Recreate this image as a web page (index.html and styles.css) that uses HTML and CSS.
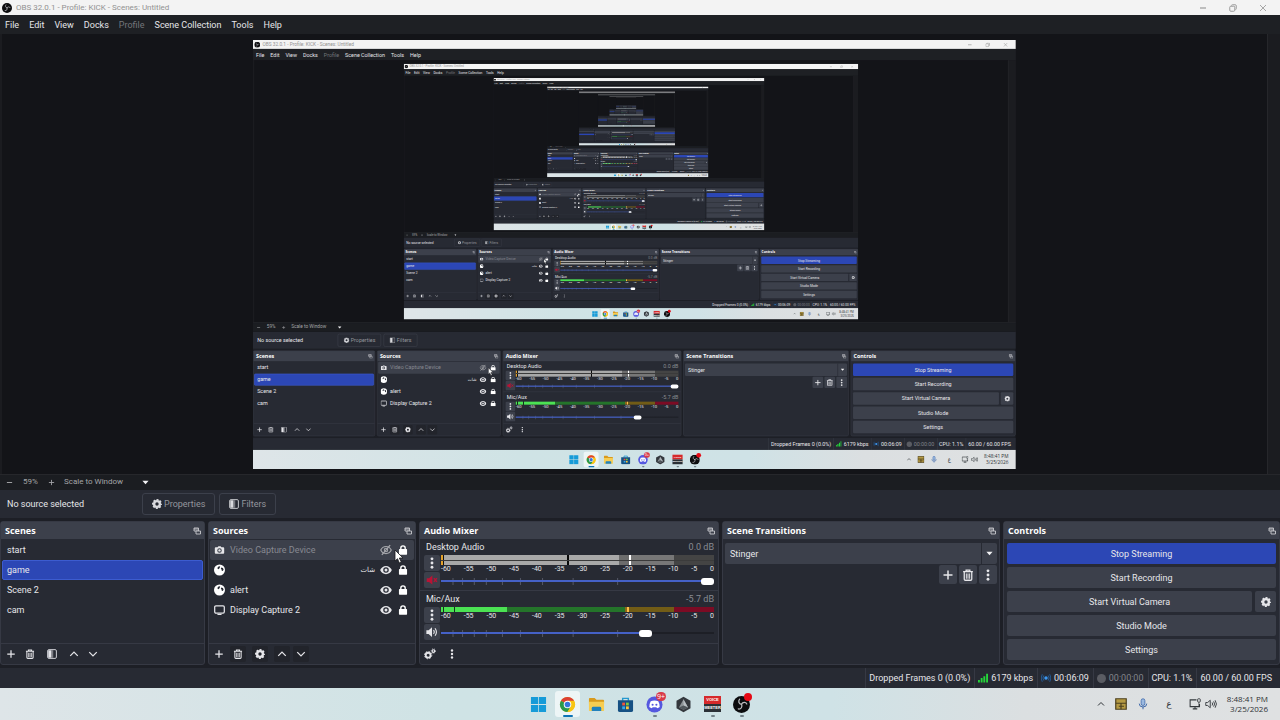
FILE: index.html
```html
<!DOCTYPE html>
<html lang="en">
<head>
<meta charset="utf-8">
<title>OBS 32.0.1 - Profile: KICK - Scenes: Untitled</title>
<link rel="stylesheet" href="styles.css">
</head>
<body>
<svg class="sprite" aria-hidden="true">
  <symbol id="obs" viewBox="0 0 16 16"><circle cx="8" cy="8" r="8" fill="#0c0c0e"/><g fill="none" stroke="#b9babd" stroke-width="1.200" stroke-linecap="round"><path d="M8 7.800C5.500 7.500 4.700 5 6.200 3"/><path d="M8 7.800C9.200 5.600 12 5.500 13 7.500"/><path d="M8 7.800C9.200 10.200 7.500 12.600 5 12.200"/></g></symbol>
  <symbol id="plus" viewBox="0 0 16 16"><path d="M8 2v12M2 8h12" fill="none" stroke="currentColor" stroke-width="2"/></symbol>
  <symbol id="minus" viewBox="0 0 16 16"><path d="M2 8h12" fill="none" stroke="currentColor" stroke-width="2.200"/></symbol>
  <symbol id="trash" viewBox="0 0 16 16"><path d="M1.500 3.500h13M5.500 3V1.500h5V3M3 4v9.500q0 1.500 1.500 1.500h7q1.500 0 1.500-1.500V4" fill="none" stroke="currentColor" stroke-width="1.700"/><path d="M5.800 6v7M8 6v7M10.200 6v7" stroke="currentColor" stroke-width="1.300"/></symbol>
  <symbol id="filter" viewBox="0 0 16 16"><rect x="1" y="1" width="14" height="14" rx="2" fill="none" stroke="currentColor" stroke-width="1.400"/><path d="M2 2h5v12H2z" fill="currentColor"/><path d="M7 2h3v12H7z" fill="currentColor" opacity=".45"/></symbol>
  <symbol id="up" viewBox="0 0 16 16"><path d="M2 11l6-6 6 6" fill="none" stroke="currentColor" stroke-width="2"/></symbol>
  <symbol id="down" viewBox="0 0 16 16"><path d="M2 5l6 6 6-6" fill="none" stroke="currentColor" stroke-width="2"/></symbol>
  <symbol id="gear" viewBox="0 0 16 16"><circle cx="8" cy="8" r="4.600" fill="none" stroke="currentColor" stroke-width="3.800"/><circle cx="8" cy="8" r="6.800" fill="none" stroke="currentColor" stroke-width="2.400" stroke-dasharray="3.200 2.140" stroke-dashoffset="1.600"/></symbol>
  <symbol id="gears" viewBox="0 0 16 16"><g fill="none" stroke="currentColor"><circle cx="5.500" cy="9.500" r="3.200" stroke-width="2.400"/><circle cx="5.500" cy="9.500" r="4.900" stroke-width="1.200" stroke-dasharray="2 1.850"/><circle cx="12.500" cy="4" r="1.700" stroke-width="1.600"/><circle cx="12.500" cy="4" r="2.900" stroke-width="1" stroke-dasharray="1.300 1.300"/></g></symbol>
  <symbol id="dots" viewBox="0 0 16 16"><g fill="currentColor"><circle cx="8" cy="2.400" r="1.900"/><circle cx="8" cy="8" r="1.900"/><circle cx="8" cy="13.600" r="1.900"/></g></symbol>
  <symbol id="popout" viewBox="0 0 16 16"><path d="M2 2h9v6H2zM2 4h9" fill="none" stroke="currentColor" stroke-width="1.800"/><path d="M6 8h9v6H6z" fill="#3c404b" stroke="currentColor" stroke-width="1.800"/></symbol>
  <symbol id="camera" viewBox="0 0 16 16"><path fill="currentColor" fill-rule="evenodd" d="M2 3.500h3L6.200 2h3.600L11 3.500h3q1.500 0 1.500 1.500v7.500q0 1.500-1.500 1.500H2Q.5 14 .5 12.500V5Q.5 3.500 2 3.500zM8 5a3.600 3.600 0 1 0 0 7.200A3.600 3.600 0 0 0 8 5z"/><circle cx="8" cy="8.600" r="1.900" fill="currentColor"/></symbol>
  <symbol id="globe" viewBox="0 0 16 16"><circle cx="8" cy="8" r="8" fill="#fff"/><path fill="#272a33" d="M6.500 3L9 2.500l-.5 2L7.500 6 6 7 4.800 5zM10.500 4.500l2.500.5 1 2.500-1.500 2-1.200-.5-.3-1.800-1-1z"/></symbol>
  <symbol id="monitor" viewBox="0 0 16 16"><rect x="1" y="2" width="14" height="10.500" rx="1.800" fill="none" stroke="currentColor" stroke-width="1.800"/><path d="M5 14.500h6" stroke="currentColor" stroke-width="1.600"/></symbol>
  <symbol id="eye" viewBox="0 0 16 16"><path fill="currentColor" fill-rule="evenodd" d="M8 2.500c3.500 0 6.500 2.300 7.800 5.500-1.300 3.200-4.300 5.500-7.800 5.500S1.500 11.200.2 8C1.500 4.800 4.500 2.500 8 2.500zM8 4.300a3.700 3.700 0 1 0 0 7.400 3.700 3.700 0 0 0 0-7.400z"/><circle cx="8" cy="8" r="2" fill="currentColor"/></symbol>
  <symbol id="eyeoff" viewBox="0 0 16 16"><path d="M1 8c1.500-3 4-4.700 7-4.700S13.500 5 15 8c-1.500 3-4 4.700-7 4.700S2.500 11 1 8z" fill="none" stroke="currentColor" stroke-width="1.600"/><circle cx="8" cy="8" r="2.300" fill="none" stroke="currentColor" stroke-width="1.400"/><path d="M2.500 14.500l11-13" stroke="currentColor" stroke-width="1.700"/></symbol>
  <symbol id="lock" viewBox="0 0 16 16"><rect x="1.500" y="6.500" width="13" height="9" rx="1" fill="#fff"/><path d="M4.500 7V4.800a3.500 3.500 0 0 1 7 0V7" fill="none" stroke="#fff" stroke-width="2.200"/></symbol>
  <symbol id="speaker" viewBox="0 0 16 16"><path d="M.5 5.500h3L8 1.500v13l-4.500-4h-3z" fill="currentColor"/><path d="M10 5.500q2 2.500 0 5M12 3q3.800 5 0 10" fill="none" stroke="currentColor" stroke-width="1.500"/></symbol>
  <symbol id="muted" viewBox="0 0 16 16"><path d="M1 5.500h3L8.500 2v12L4 10.500H1z" fill="currentColor"/><path d="M10.500 5.500l4 5m0-5l-4 5" stroke="currentColor" stroke-width="2"/></symbol>
  <symbol id="caret" viewBox="0 0 16 16"><path d="M1 4h14l-7 8z" fill="currentColor"/></symbol>
  <symbol id="bars" viewBox="0 0 16 16"><path d="M0 11h3v4H0zM4.300 8h3v7h-3zM8.600 5h3v10h-3zM13 1h3v14h-3z" fill="#25d63a"/></symbol>
  <symbol id="live" viewBox="0 0 16 16"><circle cx="8" cy="8" r="2.800" fill="#3b98f2"/><path d="M4.500 4q-3 4 0 8M11.500 4q3 4 0 8M2 2q-3.500 6 0 12M14 2q3.500 6 0 12" fill="none" stroke="#2467ae" stroke-width="1.300"/></symbol>
  <symbol id="windows" viewBox="0 0 18 18"><path d="M1 1h7.600v7.600H1zM9.400 1H17v7.600H9.400zM1 9.400h7.600V17H1zM9.400 9.400H17V17H9.400z" fill="#169bd8"/></symbol>
  <symbol id="chrome" viewBox="0 0 18 18"><circle cx="9" cy="9" r="8" fill="#f8c515"/><path d="M9 9L2.070 5A8 8 0 0 1 15.930 5z" fill="#dc4034"/><path d="M9 9L2.070 5A8 8 0 0 0 9 17l3.500-6z" fill="#29994d"/><path d="M9 5h6.930A8 8 0 0 1 9 17l3.600-6z" fill="#f8c515"/><circle cx="9" cy="9" r="4" fill="#fff"/><circle cx="9" cy="9" r="3" fill="#3576db"/></symbol>
  <symbol id="folder" viewBox="0 0 18 18"><path d="M1 3q0-1 1-1h5l2 2h7q1 0 1 1v3H1z" fill="#d99a1c"/><path d="M1 6h16v9q0 1-1 1H2q-1 0-1-1z" fill="#f7cd52"/><path d="M4 16v-3q0-1.500 1.500-1.500h7Q14 11.500 14 13v3z" fill="#2181bd"/></symbol>
  <symbol id="store" viewBox="0 0 18 18"><path d="M6 5V2.500h6V5" fill="none" stroke="#2799cf" stroke-width="1.500"/><path d="M1 4.500h16V15q0 2-2 2H3q-2 0-2-2z" fill="#155083"/><path d="M5.500 7h3v3h-3z" fill="#f0533c"/><path d="M9.500 7h3v3h-3z" fill="#7fc63d"/><path d="M5.500 11h3v3h-3z" fill="#35a9e8"/><path d="M9.500 11h3v3h-3z" fill="#fac63c"/></symbol>
  <symbol id="discord" viewBox="0 0 18 18"><circle cx="9" cy="9" r="8.500" fill="#5558df"/><path d="M5 5.500q4-1.400 8 0 1.700 3 1.500 6.200-1.300 1.100-2.800 1.300l-.7-1.200H7L6.300 13q-1.500-.2-2.800-1.300Q3.300 8.500 5 5.500z" fill="#fff"/><circle cx="7" cy="9.300" r="1.100" fill="#5558df"/><circle cx="11" cy="9.300" r="1.100" fill="#5558df"/></symbol>
  <symbol id="cube" viewBox="0 0 18 18"><path d="M9 .8l7.400 4.100v8.200L9 17.200l-7.400-4.100V4.900z" fill="#34383d"/><path d="M9 3.500l4.800 8.800L9 14.500l-4.800-2.200z" fill="#8d9397"/><path d="M9 3.500V10l4.800 2.300z" fill="#b8bec2"/><path d="M4.200 12.300L9 10l4.800 2.300L9 14.500z" fill="#50575c"/></symbol>
  <symbol id="tiles" viewBox="0 0 16 16"><path d="M1 1h14v14H1z" fill="#b59a43" stroke="#4d4120" stroke-width="1.600"/><path d="M1 7h14M8 7v8M5 11h7" stroke="#4d4120" stroke-width="1.600"/></symbol>
  <symbol id="mic" viewBox="0 0 16 16"><rect x="5.500" y="1" width="5" height="9" rx="2.500" fill="#9bb9df" stroke="#3a65a9"/><path d="M3 7.500q0 4.500 5 4.500t5-4.500M8 12v3" fill="none" stroke="#3a65a9" stroke-width="1.300"/></symbol>
  <symbol id="network" viewBox="0 0 16 16"><path d="M10 2.500H1.500v9H14V8M5 14.500h6M8 12v2" fill="none" stroke="#33383c" stroke-width="1.400"/><rect x="11.500" y="1" width="3.500" height="4.500" rx="1" fill="none" stroke="#33383c" stroke-width="1.200"/><path d="M13.200 5.500v6" stroke="#33383c"/></symbol>
  <symbol id="sound" viewBox="0 0 16 16"><path d="M1 6h2.500L7 3v10l-3.500-3H1zM9.500 6q1.300 2 0 4M11.500 4.500q2.500 3.500 0 7M13.500 3q3.500 5 0 10" fill="none" stroke="#33383c" stroke-width="1.200"/></symbol>
  <symbol id="restore" viewBox="0 0 16 16"><rect x="1.500" y="4.500" width="10" height="10" rx="2" fill="none" stroke="currentColor" stroke-width="1.800"/><path d="M5 3q0-1.500 2-1.500h5.500q2 0 2 2V9q0 2-1.500 2" fill="none" stroke="currentColor" stroke-width="1.800"/></symbol>
  <symbol id="close" viewBox="0 0 16 16"><path d="M2 2l12 12M14 2L2 14" fill="none" stroke="currentColor" stroke-width="1.600"/></symbol>
  <symbol id="pointer" viewBox="0 0 10 15"><path d="M1 1v11l2.500-2.300L5.300 14l2-1-2-4H9z" fill="#fff" stroke="#17181c" stroke-width=".8"/></symbol>
</svg>

<div class="desktop">
  <header class="titlebar">
    <svg class="icon title-logo"><use href="#obs"/></svg>
    <span class="title-text">OBS 32.0.1 - Profile: KICK - Scenes: Untitled</span>
    <div class="window-buttons">
      <button aria-label="Minimize"><svg class="icon small"><use href="#minus"/></svg></button>
      <button aria-label="Restore"><svg class="icon small"><use href="#restore"/></svg></button>
      <button aria-label="Close"><svg class="icon small"><use href="#close"/></svg></button>
    </div>
  </header>
  <nav class="menubar">
    <button>File</button><button>Edit</button><button>View</button><button>Docks</button><button disabled>Profile</button><button>Scene Collection</button><button>Tools</button><button>Help</button>
  </nav>

  <main class="workspace">
    <section class="preview" aria-label="Preview">
      <div class="canvas"><div class="frame"></div></div>
      <div class="scrollbar"></div>
    </section>
    <div class="zoombar">
      <button aria-label="Zoom out"><svg class="icon tiny"><use href="#minus"/></svg></button>
      <span class="zoom-value">59%</span>
      <button aria-label="Zoom in"><svg class="icon tiny"><use href="#plus"/></svg></button>
      <div class="select-wrap zoom-mode">
        <select aria-label="Preview scaling"><option>Scale to Window</option></select>
        <svg class="icon tiny caret"><use href="#caret"/></svg>
      </div>
    </div>
    <div class="contextbar">
      <span class="context-label">No source selected</span>
      <button class="outline" disabled><svg class="icon"><use href="#gear"/></svg>Properties</button>
      <button class="outline" disabled><svg class="icon"><use href="#filter"/></svg>Filters</button>
    </div>

    <div class="docks">
      <section class="dock">
        <h2 class="dock-title">Scenes<svg class="icon small"><use href="#popout"/></svg></h2>
        <ul class="list">
          <li class="row">start</li>
          <li class="row selected">game</li>
          <li class="row">Scene 2</li>
          <li class="row">cam</li>
        </ul>
        <div class="toolbar">
          <button aria-label="Add scene"><svg class="icon"><use href="#plus"/></svg></button>
          <button aria-label="Remove scene"><svg class="icon"><use href="#trash"/></svg></button>
          <button class="spaced" aria-label="Scene filters"><svg class="icon"><use href="#filter"/></svg></button>
          <button class="spaced" aria-label="Move scene up"><svg class="icon"><use href="#up"/></svg></button>
          <button aria-label="Move scene down"><svg class="icon"><use href="#down"/></svg></button>
        </div>
      </section>

      <section class="dock">
        <h2 class="dock-title">Sources<svg class="icon small"><use href="#popout"/></svg></h2>
        <ul class="list">
          <li class="row source hovered">
            <svg class="icon"><use href="#camera"/></svg><span class="source-name">Video Capture Device</span>
            <button aria-label="Show source"><svg class="icon large"><use href="#eyeoff"/></svg></button>
            <button aria-label="Unlock source"><svg class="icon"><use href="#lock"/></svg></button>
            <svg class="pointer"><use href="#pointer"/></svg>
          </li>
          <li class="row source">
            <svg class="icon large"><use href="#globe"/></svg><span class="source-name" dir="rtl" lang="ar">شات</span>
            <button aria-label="Hide source"><svg class="icon large"><use href="#eye"/></svg></button>
            <button aria-label="Unlock source"><svg class="icon"><use href="#lock"/></svg></button>
          </li>
          <li class="row source">
            <svg class="icon large"><use href="#globe"/></svg><span class="source-name">alert</span>
            <button aria-label="Hide source"><svg class="icon large"><use href="#eye"/></svg></button>
            <button aria-label="Unlock source"><svg class="icon"><use href="#lock"/></svg></button>
          </li>
          <li class="row source">
            <svg class="icon large"><use href="#monitor"/></svg><span class="source-name">Display Capture 2</span>
            <button aria-label="Hide source"><svg class="icon large"><use href="#eye"/></svg></button>
            <button aria-label="Unlock source"><svg class="icon"><use href="#lock"/></svg></button>
          </li>
        </ul>
        <div class="toolbar dimmed">
          <button aria-label="Add source"><svg class="icon"><use href="#plus"/></svg></button>
          <button aria-label="Remove source"><svg class="icon"><use href="#trash"/></svg></button>
          <button class="spaced" aria-label="Source properties"><svg class="icon"><use href="#gear"/></svg></button>
          <button class="spaced" aria-label="Move source up"><svg class="icon"><use href="#up"/></svg></button>
          <button aria-label="Move source down"><svg class="icon"><use href="#down"/></svg></button>
        </div>
      </section>

      <section class="dock">
        <h2 class="dock-title">Audio Mixer<svg class="icon small"><use href="#popout"/></svg></h2>
        <div class="mixer">
          <div class="channel">
            <div class="channel-head"><span>Desktop Audio</span><span class="level">0.0 dB</span></div>
            <div class="channel-body">
              <div class="channel-buttons">
                <button aria-label="Desktop Audio options"><svg class="icon large"><use href="#dots"/></svg></button>
                <button class="mute-on" aria-label="Unmute Desktop Audio"><svg class="icon large"><use href="#muted"/></svg></button>
              </div>
              <div class="channel-meter">
                <div class="meter stereo"></div>
                <div class="scale"><span>-60</span><span>-55</span><span>-50</span><span>-45</span><span>-40</span><span>-35</span><span>-30</span><span>-25</span><span>-20</span><span>-15</span><span>-10</span><span>-5</span><span>0</span></div>
                <div class="fader">
                  <svg class="marks"><line x1="4.4%" x2="4.4%" y2="100%"/><line x1="7.9%" x2="7.9%" y2="100%"/><line x1="12.2%" x2="12.2%" y2="100%"/><line x1="16.6%" x2="16.6%" y2="100%"/><line x1="22.5%" x2="22.5%" y2="100%"/><line x1="29.1%" x2="29.1%" y2="100%"/><line x1="37.2%" x2="37.2%" y2="100%"/><line x1="48.4%" x2="48.4%" y2="100%"/><line x1="64.7%" x2="64.7%" y2="100%"/></svg>
                  <input type="range" aria-label="Desktop Audio volume" min="0" max="100" value="100" style="--fill:100%">
                </div>
              </div>
            </div>
          </div>
          <div class="channel">
            <div class="channel-head"><span>Mic/Aux</span><span class="level">-5.7 dB</span></div>
            <div class="channel-body">
              <div class="channel-buttons">
                <button aria-label="Mic/Aux options"><svg class="icon large"><use href="#dots"/></svg></button>
                <button aria-label="Mute Mic/Aux"><svg class="icon large"><use href="#speaker"/></svg></button>
              </div>
              <div class="channel-meter">
                <div class="meter mono"></div>
                <div class="scale"><span>-60</span><span>-55</span><span>-50</span><span>-45</span><span>-40</span><span>-35</span><span>-30</span><span>-25</span><span>-20</span><span>-15</span><span>-10</span><span>-5</span><span>0</span></div>
                <div class="fader">
                  <svg class="marks"><line x1="4.4%" x2="4.4%" y2="100%"/><line x1="7.9%" x2="7.9%" y2="100%"/><line x1="12.2%" x2="12.2%" y2="100%"/><line x1="16.6%" x2="16.6%" y2="100%"/><line x1="22.5%" x2="22.5%" y2="100%"/><line x1="29.1%" x2="29.1%" y2="100%"/><line x1="37.2%" x2="37.2%" y2="100%"/><line x1="48.4%" x2="48.4%" y2="100%"/><line x1="64.7%" x2="64.7%" y2="100%"/></svg>
                  <input type="range" aria-label="Mic/Aux volume" min="0" max="100" value="76" style="--fill:76%">
                </div>
              </div>
            </div>
          </div>
        </div>
        <div class="toolbar">
          <button aria-label="Advanced audio properties"><svg class="icon large"><use href="#gears"/></svg></button>
          <button class="spaced" aria-label="Mixer menu"><svg class="icon"><use href="#dots"/></svg></button>
        </div>
      </section>

      <section class="dock">
        <h2 class="dock-title">Scene Transitions<svg class="icon small"><use href="#popout"/></svg></h2>
        <div class="transitions">
          <div class="select-wrap transition-select">
            <select aria-label="Transition"><option>Stinger</option></select>
            <svg class="icon tiny caret"><use href="#caret"/></svg>
          </div>
          <div class="transition-buttons">
            <button aria-label="Add transition"><svg class="icon large"><use href="#plus"/></svg></button>
            <button aria-label="Remove transition"><svg class="icon large"><use href="#trash"/></svg></button>
            <button aria-label="Transition menu"><svg class="icon large"><use href="#dots"/></svg></button>
          </div>
        </div>
      </section>

      <section class="dock">
        <h2 class="dock-title">Controls<svg class="icon small"><use href="#popout"/></svg></h2>
        <div class="controls">
          <button class="primary">Stop Streaming</button>
          <button>Start Recording</button>
          <div class="split"><button>Start Virtual Camera</button><button aria-label="Virtual camera settings"><svg class="icon"><use href="#gear"/></svg></button></div>
          <button>Studio Mode</button>
          <button>Settings</button>
        </div>
      </section>
    </div>

    <footer class="statusbar">
      <span class="status">Dropped Frames 0 (0.0%)</span>
      <span class="status"><svg class="icon"><use href="#bars"/></svg>6179 kbps</span>
      <span class="status"><svg class="icon"><use href="#live"/></svg>00:06:09</span>
      <span class="status idle"><i class="rec-dot"></i>00:00:00</span>
      <span class="status">CPU: 1.1%</span>
      <span class="status">60.00 / 60.00 FPS</span>
    </footer>
  </main>

  <footer class="taskbar">
    <div class="apps">
      <button class="app" aria-label="Start"><svg><use href="#windows"/></svg></button>
      <button class="app active" aria-label="Chrome"><svg><use href="#chrome"/></svg></button>
      <button class="app" aria-label="File Explorer"><svg><use href="#folder"/></svg></button>
      <button class="app" aria-label="Store"><svg><use href="#store"/></svg></button>
      <button class="app running" aria-label="Discord"><svg><use href="#discord"/></svg><span class="badge">9+</span></button>
      <button class="app" aria-label="Cube"><svg><use href="#cube"/></svg></button>
      <button class="app running" aria-label="Voicemeeter"><span class="voice"><span>VOICE</span><span>MEETER</span></span></button>
      <button class="app running" aria-label="OBS Studio"><svg><use href="#obs"/></svg><span class="live-dot"></span></button>
    </div>
    <div class="tray">
      <button aria-label="Hidden icons"><svg class="icon small"><use href="#up"/></svg></button>
      <svg class="icon large"><use href="#tiles"/></svg>
      <svg class="icon large"><use href="#mic"/></svg>
      <span class="input-language" lang="ar">ع</span>
      <div class="tray-pair"><svg class="icon large"><use href="#network"/></svg><svg class="icon large"><use href="#sound"/></svg></div>
      <div class="clock"><span>8:48:41 PM</span><span>3/25/2026</span></div>
    </div>
  </footer>
</div>
<script src="mirror.js"></script>
</body>
</html>
```

FILE: styles.css
```css
* { box-sizing: border-box; }

html, body { height: 100%; }

body {
  margin: 0;
  overflow: hidden;
  background: #131418;
  color: #e6e6ea;
  font: 9px/12px Roboto, "Noto Sans", "DejaVu Sans", sans-serif;
}

button, select, input { margin: 0; font: inherit; color: inherit; }

button {
  display: flex;
  align-items: center;
  justify-content: center;
  padding: 0;
  border: 0;
  background: none;
}

.sprite { position: absolute; width: 0; height: 0; }
.icon { display: block; flex: none; width: 10px; height: 10px; }
.icon.tiny { width: 7px; height: 7px; }
.icon.small { width: 8px; height: 8px; }
.icon.large { width: 12px; height: 12px; }

.desktop { display: flex; flex-direction: column; height: 100%; background: #1d1f26; }

/* Window chrome */
.titlebar {
  display: flex;
  align-items: center;
  gap: 4px;
  height: 15px;
  padding: 0 13px 0 2px;
  background: #f3f3f3;
  color: #929292;
  font-size: 8px;
}
.title-text { flex: 1; }
.window-buttons { display: flex; gap: 22px; }

.menubar {
  display: flex;
  gap: 10px;
  height: 19px;
  padding: 0 5px;
  background: #1e2024;
}
.menubar button:disabled { color: #74767b; }

/* Preview */
.workspace { flex: 1; display: flex; flex-direction: column; min-height: 0; }
.preview { flex: 1; display: flex; min-height: 0; padding-left: 2px; background: #1b1c20; }
.canvas {
  flex: 1;
  display: flex;
  justify-content: center;
  min-width: 0;
  padding: 6px 0 5px;
  background: #131418;
}
.frame { overflow: hidden; height: 100%; }
.mirror { transform-origin: 0 0; }
.scrollbar { width: 13px; border-left: 1px solid #26272b; background: #1b1c20; }

.zoombar {
  display: flex;
  align-items: center;
  height: 16px;
  padding: 0 6px 1px;
  border-top: 1px solid #26272b;
  background: #1b1d21;
  color: #a4a5a8;
  font-size: 8px;
}
.zoom-value { width: 35px; text-align: center; }
.zoom-mode { width: 89px; margin-left: 9px; }

.select-wrap { display: flex; align-items: center; position: relative; }
.select-wrap select {
  flex: 1;
  height: 100%;
  padding: 0;
  border: 0;
  appearance: none;
  background: none;
}
.caret { position: absolute; right: 4px; color: #f2f2f4; pointer-events: none; }

.contextbar {
  display: flex;
  align-items: center;
  gap: 4px;
  height: 28px;
  padding: 0 7px;
  background: #272a33;
}
.context-label { width: 131px; }
.outline {
  gap: 2px;
  height: 22px;
  padding: 0 9px;
  border: 1px solid #3c404b;
  border-radius: 3px;
  color: #94969d;
}
.outline .icon { color: #d9dade; }

/* Docks */
.docks {
  display: grid;
  grid-template-columns: 205fr 208fr 300fr 278fr 277fr;
  gap: 3px;
  padding: 3px 0;
}
.dock {
  display: flex;
  flex-direction: column;
  min-width: 0;
  height: 144px;
  border: 1px solid #363944;
  border-radius: 3px;
  background: #272a33;
}
.dock-title {
  display: flex;
  flex: none;
  align-items: center;
  justify-content: space-between;
  height: 17px;
  margin: 0;
  padding: 0 3px 0 4px;
  background: #3c404b;
  color: #fefefe;
  font-family: "Open Sans", "Noto Sans", sans-serif;
  font-size: 9px;
  font-weight: 700;
}
.dock-title .icon { color: #c8c9ce; }

.list { flex: 1; margin: 0; padding: 1px 1px 0; list-style: none; }
.row {
  display: flex;
  align-items: center;
  height: 20px;
  padding: 0 5px;
  border-radius: 2px;
}
.row.selected { border: 1px solid #3c5cd0; padding: 0 4px; background: #2c47b5; }
.row.source { position: relative; gap: 5px; padding: 0 6px 0 4px; }
.row.source > .icon { width: 11px; }
.row.hovered { background: #3c404b; }
.row.hovered .source-name { color: #878991; }
.source-name { flex: 1; }
.source-name:lang(ar) { font-size: 7px; }
.row.source .pointer { position: absolute; right: 10px; top: 9px; width: 10px; height: 15px; }
.source button:first-of-type { margin-right: 1px; }
.hovered button:first-of-type { color: #a5a6ab; }

.toolbar {
  display: flex;
  align-items: center;
  gap: 3px;
  height: 21px;
  padding: 0 2px;
  border-top: 1px solid #363944;
}
.toolbar button { width: 16px; height: 16px; border-radius: 2px; }
.toolbar .spaced { margin-left: 3px; }
.dimmed button + button { background: #22242b; }

/* Audio mixer */
.mixer { flex: 1; }
.channel { height: 52px; padding: 2px 4px 0; border-bottom: 1px solid #363944; }
.channel:last-child { border-bottom: 0; }
.channel-head { display: flex; justify-content: space-between; padding-left: 2px; }
.level { color: #898b92; }
.channel-body { display: flex; gap: 1px; }
.channel-buttons { display: flex; flex-direction: column; gap: 1px; margin-top: 2px; }
.channel-buttons button { width: 16px; height: 16px; border-radius: 2px; background: #3c404b; }
.channel-buttons .mute-on { color: #b81335; }
.channel-meter { flex: 1; min-width: 0; }
.meter { height: 5px; margin-top: 2px; }
.meter.stereo {
  height: 10px;
  background:
    linear-gradient(transparent 45%, #3b3b3b 45% 55%, transparent 55%),
    linear-gradient(90deg, #e2a02a 0 .6%, #111 .6% 1.1%, #a8a8a8 1.1% 46.3%, #0a0a0a 46.3% 47%, #a8a8a8 47% 65.2%, #6c6c6c 65.2% 69%, #fff 69% 69.700%, #777 69.700% 85.300%, #444 85.300%);
}
.meter.mono {
  background: linear-gradient(90deg, #4be253 0 .7%, #14301a .7% 1.200%, #4be253 1.200% 4.600%, #14301a 4.600% 5.300%, #4be253 5.300% 24.300%, #24742a 24.300% 67.400%, #8b681a 67.400% 68.200%, #ffbd49 68.200% 69%, #725c16 69% 85.300%, #7c0b24 85.300%);
}
.scale { display: flex; justify-content: space-between; height: 9px; font-size: 7px; line-height: 9px; }
.fader { display: grid; align-items: center; height: 14px; }
.mono ~ .fader { height: 18px; margin-top: 3px; }
.fader > * { grid-area: 1 / 1; }
.marks { width: 100%; height: 7px; }
.marks line { stroke: #555966; stroke-width: 1px; }
.fader input {
  width: 100%;
  height: 7px;
  appearance: none;
  background: linear-gradient(90deg, #4561c7 var(--fill), #1d1f26 var(--fill)) center / 100% 2px no-repeat;
}
.fader input::-webkit-slider-thumb {
  appearance: none;
  width: 13px;
  height: 7px;
  border-radius: 3px;
  background: #fff;
}

/* Transitions and controls */
.transitions { padding: 4px 2px; }
.transition-select { height: 21px; padding-left: 5px; border-radius: 2px; background: #3c404b; }
.transition-select select { border-right: 1px solid #272a33; margin-right: 15px; }
.transition-buttons { display: flex; justify-content: flex-end; gap: 2px; margin-top: 1px; }
.transition-buttons button { width: 18px; height: 19px; border-radius: 2px; background: #3c404b; }

.controls { display: flex; flex-direction: column; gap: 3px; padding: 4px 3px; }
.controls button { flex: 1; min-height: 21px; border-radius: 2px; background: #3c404b; }
.controls .primary { background: #2c47b5; }
.split { display: flex; gap: 3px; }
.split button + button { flex: none; width: 21px; }

/* Status bar */
.statusbar { display: flex; justify-content: flex-end; height: 20px; padding-right: 4px; background: #272a33; }
.status { display: flex; align-items: center; gap: 3px; padding: 0 4px 0 3px; border-left: 1px solid #363944; }
.idle { color: #81838a; }
.rec-dot { width: 9px; height: 9px; border-radius: 50%; background: #5a5c63; }

/* Taskbar */
.taskbar {
  display: grid;
  grid-template-columns: 1fr auto 1fr;
  height: 32px;
  background: linear-gradient(90deg, #dee5e8, #cfe3e5 35%, #cfe2e6 65%, #dbdfe1 80%, #dfe1e2);
  color: #2e3236;
  font-family: "Open Sans", "DejaVu Sans", sans-serif;
}
.apps { display: flex; align-items: center; gap: 4px; grid-column: 2; }
.app { position: relative; width: 25px; height: 26px; border-radius: 3px; }
.app svg { width: 17px; height: 17px; }
.app.active { background: #edf5f6; }
.app.active::after, .app.running::after {
  content: "";
  position: absolute;
  bottom: 0;
  width: 4px;
  height: 2px;
  border-radius: 1px;
  background: #74838a;
}
.app.active::after { width: 10px; background: #0d73b6; }
.badge {
  position: absolute;
  top: 1px;
  right: 1px;
  padding: 0 1px;
  border-radius: 5px;
  background: #d83a49;
  color: #fff;
  font-size: 7px;
  line-height: 9px;
}
.live-dot { position: absolute; top: 2px; right: 2px; width: 8px; height: 8px; border-radius: 50%; background: #e50914; }
.voice { width: 17px; color: #fff; font: 700 4px/8px "Liberation Sans", sans-serif; }
.voice span { display: block; background: #2b3036; }
.voice span:first-child { background: #d6292b; }

.tray { display: flex; align-items: center; justify-content: flex-end; gap: 10px; padding-right: 12px; }
.input-language { width: 20px; text-align: center; }
.tray-pair { display: flex; gap: 4px; }
.clock { display: flex; flex-direction: column; text-align: right; font-size: 8px; line-height: 10px; }
```

FILE: mirror.js
```js
// The captured display contains the program itself, so the preview repeats it.
const LEVELS = 8;
// Copies smaller than this many pixels across carry shapes only.
const SMALLEST_TEXT_WIDTH = 120;
const desktop = document.querySelector('.desktop');
const template = desktop.cloneNode(true);
template.classList.add('mirror');
template.inert = true;
template.setAttribute('aria-hidden', 'true');

function removeText(root) {
  const walker = document.createTreeWalker(root, NodeFilter.SHOW_TEXT);
  const nodes = [];
  while (walker.nextNode()) nodes.push(walker.currentNode);
  nodes.forEach(node => node.remove());
}

function drawPreview() {
  const frame = desktop.querySelector('.frame');
  const width = window.innerWidth;
  const height = window.innerHeight;
  const scale = frame.clientHeight / height;
  let content = null;
  for (let level = LEVELS; level > 0; level--) {
    const copy = template.cloneNode(true);
    copy.style.width = width + 'px';
    copy.style.height = height + 'px';
    copy.style.transform = `scale(${scale})`;
    if (width * scale ** level < SMALLEST_TEXT_WIDTH) removeText(copy);
    const inner = copy.querySelector('.frame');
    inner.style.width = width * scale + 'px';
    if (content) inner.append(content);
    content = copy;
  }
  frame.style.width = width * scale + 'px';
  frame.replaceChildren(content);
}

drawPreview();
window.addEventListener('resize', drawPreview);
```
